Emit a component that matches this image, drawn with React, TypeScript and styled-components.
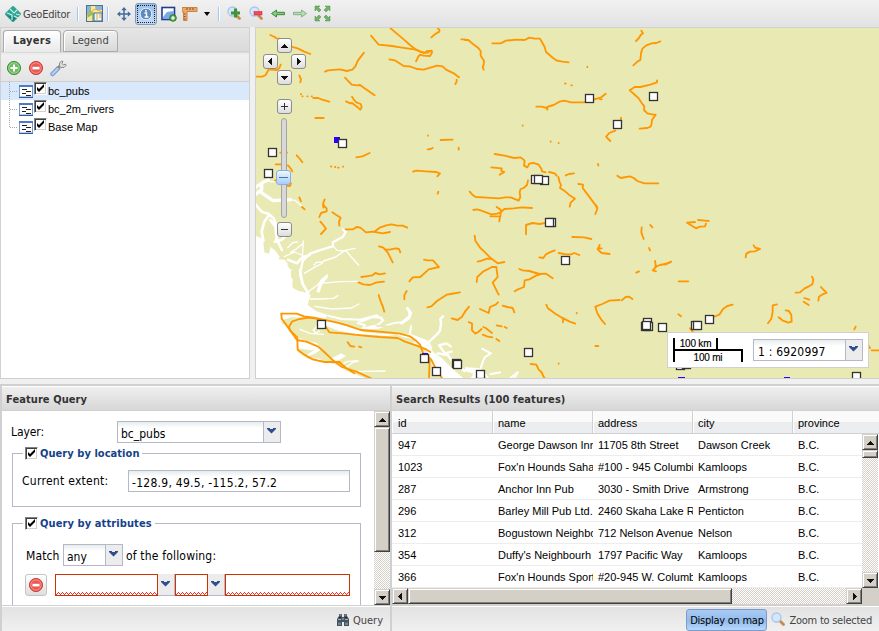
import React from "react";
import styled, { createGlobalStyle, css } from "styled-components";

const Global = createGlobalStyle`
  * { box-sizing: border-box; }
  html, body { margin: 0; padding: 0; }
  body { background: #f0f0f0; overflow: hidden; }
  svg { display: block; }
`;

const tahoma = css`font-family: "DejaVu Sans Condensed", "DejaVu Sans", sans-serif; font-stretch: condensed;`;
const arial = css`font-family: "Liberation Sans", Arial, sans-serif;`;

const Text = styled.span<{ $size?: number; $ls?: number; $bold?: boolean; $color?: string; $ml?: number; $dy?: number; $w?: number }>`
  ${tahoma}
  font-size: ${(p) => p.$size ?? 12}px;
  letter-spacing: ${(p) => p.$ls ?? 0}px;
  font-weight: ${(p) => (p.$bold ? 700 : 400)};
  color: ${(p) => p.$color ?? "#000"};
  margin-left: ${(p) => p.$ml ?? 0}px;
  padding-top: ${(p) => p.$dy ?? 0}px;
  width: ${(p) => (p.$w ? `${p.$w}px` : "auto")};
  flex: none;
  white-space: nowrap;
`;

const Window = styled.div`
  width: 879px;
  height: 631px;
  display: flex;
  flex-direction: column;
  overflow: hidden;
  background: #f0f0f0;
`;
const Toolbar = styled.header`
  height: 27px;
  flex: none;
  display: flex;
  align-items: center;
  padding-left: 4px;
  background: linear-gradient(#f1f1f1, #e2e2e2);
`;
const Slot = styled.div<{ $ml?: number; $w?: number }>`
  width: ${(p) => p.$w ?? 16}px;
  flex: none;
  margin-left: ${(p) => p.$ml ?? 0}px;
`;
const Separator = styled.i<{ $ml: number }>`
  width: 2px;
  height: 14px;
  margin-left: ${(p) => p.$ml}px;
  background: linear-gradient(90deg, #98c8ff 50%, #fff 50%);
`;
const Pressed = styled.div`
  width: 22px;
  height: 22px;
  margin-left: 3px;
  border: 1px solid #7b9cc8;
  border-radius: 3px;
  background: linear-gradient(#9dbfe8, #c4dbf6);
  display: grid;
  place-items: center;
  outline: 1px dotted #222;
  outline-offset: -3px;
`;

const Upper = styled.main`
  height: 357px;
  flex: none;
  display: flex;
  gap: 5px;
`;
const Sidebar = styled.aside`
  width: 250px;
  height: 352px;
  display: flex;
  flex-direction: column;
  border: 1px solid #d0d0d0;
  background: #fff;
`;
const Tabs = styled.div`
  height: 27px;
  flex: none;
  display: flex;
  align-items: flex-end;
  padding: 0 2px 3px;
  gap: 2px;
  background: linear-gradient(#e6e6e6, #dadada 23px, #c8c8c8 24px, #ececec 25px);
`;
const Tab = styled.div<{ $active?: boolean; $w: number }>`
  width: ${(p) => p.$w}px;
  height: 22px;
  display: flex;
  justify-content: center;
  line-height: 20px;
  border: 1px solid #aaa;
  border-bottom: ${(p) => (p.$active ? "0" : "1px solid #aaa")};
  border-radius: 4px 4px 0 0;
  background: ${(p) => (p.$active ? "linear-gradient(#fff, #e9e9e9)" : "linear-gradient(#f0f0f0, #d8d8d8)")};
  box-shadow: inset 1px 1px #fff;
`;
const TreeBar = styled.div`
  height: 27px;
  flex: none;
  display: flex;
  align-items: center;
  padding-left: 5px;
  gap: 6px;
  border-bottom: 1px solid #d0d0d0;
  background: linear-gradient(#f0f0f0, #e4e4e4);
`;
const TreeRow = styled.div<{ $on?: boolean }>`
  height: 18px;
  display: flex;
  align-items: center;
  padding-left: 7px;
  background: ${(p) => (p.$on ? "#d9e8fb" : "#fff")};
`;
const TreeLabel = styled.span`
  ${arial}
  font-size: 11px;
  margin-left: 1px;
  line-height: 18px;
`;
const CheckBox = styled.span<{ $ml?: number; $up?: number }>`
  width: 13px;
  height: 13px;
  flex: none;
  margin-left: ${(p) => p.$ml ?? 0}px;
  margin-bottom: ${(p) => p.$up ?? 0}px;
  border: 1px solid;
  border-color: #808080 #fff #fff #808080;
  box-shadow: inset 1px 1px #404040, inset -1px -1px #d4d0c8;
  background: #fff;
`;
const Tick = (p: { ml?: number; up?: number }) => (
  <CheckBox $ml={p.ml} $up={p.up}>
    <svg width="11" height="11" viewBox="0 0 11 11"><path d="M2 4v3l2 2 5-5V1L4 6z" fill="#000" /></svg>
  </CheckBox>
);

const MapPanel = styled.section`
  flex: 1;
  height: 352px;
  position: relative;
  border: 1px solid #d0d0d0;
  border-right: 0;
  overflow: hidden;
  background: #e9e9b4;
`;
const MapButton = styled.button<{ $x: number; $y: number }>`
  position: absolute;
  left: ${(p) => p.$x}px;
  top: ${(p) => p.$y}px;
  width: 15px;
  height: 15px;
  padding: 0;
  display: grid;
  place-items: center;
  border: 1px solid #8c8c8c;
  border-radius: 3px;
  background: linear-gradient(#fff, #ddd);
`;
const SliderTrack = styled.div`
  position: absolute;
  left: 25px;
  top: 90px;
  width: 6px;
  height: 100px;
  border: 1px solid #a4a4a4;
  border-radius: 3px;
  background: #d8d8d8;
`;
const SliderThumb = styled.div`
  position: absolute;
  left: 20px;
  top: 142px;
  width: 15px;
  height: 15px;
  border: 1px solid #88b0e4;
  border-radius: 3px;
  background: linear-gradient(#eef6ff, #a7cdfb);
  &::after { content: ""; display: block; height: 1px; margin: 6px 2px; background: #4678b8; }
`;
const ScaleBox = styled.div`
  position: absolute;
  left: 411px;
  top: 304px;
  width: 202px;
  height: 36px;
  display: flex;
  align-items: center;
  padding-left: 5px;
  border: 1px solid #d0d0d0;
  background: #fff;
`;
const ScaleBar = styled.div`
  width: 70px;
  height: 24px;
  flex: none;
  ${arial}
  font-size: 10px;
  line-height: 10px;
  -webkit-text-stroke: .15px #000;
  text-align: center;
`;
const Kilometres = styled.div`width: 45px; height: 11px; border: 2px solid #000; border-width: 0 2px 0 2px; line-height: 12px; letter-spacing: -.2px;`;
const Miles = styled.div`width: 70px; height: 13px; border: 2px solid #000; border-bottom: 0; line-height: 13px; letter-spacing: -.2px;`;

const Combo = styled.div<{ $w: number; $ml?: number }>`
  width: ${(p) => p.$w}px;
  height: 22px;
  flex: none;
  margin-left: ${(p) => p.$ml ?? 0}px;
  display: flex;
  border: 1px solid #b5b8c8;
  background: linear-gradient(#e6ecec, #fff 6px);
`;
const ComboText = styled.div`
  flex: 1;
  padding: 3px 0 0 3px;
  line-height: 18px;
  overflow: hidden;
  display: flex;
`;
const Trigger = styled.div<{ $solo?: boolean }>`
  width: 17px;
  height: ${(p) => (p.$solo ? 22 : 20)}px;
  flex: none;
  display: grid;
  place-items: center;
  padding: 0 1px 2px 0;
  background: #ececec;
  border: 0 solid #b5b8c8;
  border-left-width: ${(p) => (p.$solo ? 0 : 1)}px;
  border-bottom-width: ${(p) => (p.$solo ? 1 : 0)}px;
  border-right-width: ${(p) => (p.$solo ? 1 : 0)}px;
`;
const Chevron = () => (
  <svg width="9" height="6" viewBox="0 0 9 6"><path d="M0 0h3v1h3V0h3v1L4.500 5.500 0 1z" fill="#2e4d92" /></svg>
);

const Lower = styled.section`
  height: 247px;
  flex: none;
  display: flex;
  border-top: 2px solid #d0d0d0;
`;
const Panel = styled.section<{ $w: number }>`
  width: ${(p) => p.$w}px;
  flex: none;
  display: flex;
  flex-direction: column;
  border-left: 2px solid #d0d0d0;
`;
const PanelHead = styled.h2`
  height: 25px;
  flex: none;
  margin: 0;
  padding: 1px 0 0 4px;
  display: flex;
  align-items: center;
  border-top: 1px solid #fff;
  border-bottom: 1px solid #d0d0d0;
  background: linear-gradient(#efefef, #d7d7d7);
`;
const PanelBody = styled.div`
  height: 194px;
  flex: none;
  display: flex;
  background: #fff;
  overflow: hidden;
`;
const Footer = styled.footer`
  flex: 1;
  display: flex;
  align-items: center;
  justify-content: flex-end;
  padding: 2px 7px 0 0;
  border-top: 1px solid #d0d0d0;
  box-shadow: inset 0 1px #fff;
  background: linear-gradient(#e2e2e2, #f0f0f0);
`;
const Form = styled.div`
  width: 372px;
  flex: none;
  padding: 10px 13px 0 10px;
`;
const FormRow = styled.div<{ $pl?: number; $mt?: number }>`
  display: flex;
  align-items: center;
  height: 22px;
  padding-left: ${(p) => p.$pl ?? 0}px;
  margin-top: ${(p) => p.$mt ?? 0}px;
`;
const Group = styled.div<{ $h: number; $mt: number }>`
  width: 349px;
  height: ${(p) => p.$h}px;
  margin-top: ${(p) => p.$mt}px;
  border: 1px solid #b5b8c8;
`;
const Legend = styled.div`
  width: fit-content;
  height: 14px;
  margin: -8px 0 0 10px;
  padding: 0 3px 0 2px;
  display: flex;
  align-items: center;
  background: #fff;
`;
const Field = styled.div`
  width: 222px;
  height: 22px;
  flex: none;
  padding: 3px 3px 0;
  line-height: 18px;
  display: flex;
  border: 1px solid #b5b8c8;
  background: linear-gradient(#e6ecec, #fff 6px);
`;
const Invalid = styled.div<{ $w: number }>`
  width: ${(p) => p.$w}px;
  height: 22px;
  flex: none;
  border: 1px solid #c30;
  display: flex;
  align-items: flex-end;
  overflow: hidden;
`;
const Wave = () => (
  <svg width="130" height="3" shapeRendering="crispEdges">
    <defs><pattern id="wave" width="4" height="3" patternUnits="userSpaceOnUse">
      <path d="M0 2h1v1H0zM1 1h1v1H1zM2 0h1v1H2zM3 1h1v1H3z" fill="#e33" /></pattern></defs>
    <rect width="130" height="3" fill="url(#wave)" />
  </svg>
);
const SquareButton = styled.button`
  width: 22px;
  height: 22px;
  flex: none;
  padding: 0;
  margin-right: 8px;
  display: grid;
  place-items: center;
  border: 1px solid #c4c4c4;
  border-radius: 3px;
  background: linear-gradient(#fff, #dedede);
`;

const raised = css`
  background: #d4d0c8;
  border: 1px solid;
  border-color: #d4d0c8 #404040 #404040 #d4d0c8;
  box-shadow: inset 1px 1px #fff, inset -1px -1px #808080;
`;
const ScrollBar = styled.div<{ $h?: boolean; $len: number }>`
  width: ${(p) => (p.$h ? p.$len : 16)}px;
  height: ${(p) => (p.$h ? 16 : p.$len)}px;
  flex: none;
  display: flex;
  flex-direction: ${(p) => (p.$h ? "row" : "column")};
  background: repeating-conic-gradient(#d4d0c8 0 25%, #fff 0 50%) 0 0 / 2px 2px;
`;
const ScrollButton = styled.div`
  width: 16px;
  height: 16px;
  flex: none;
  display: grid;
  place-items: center;
  ${raised}
`;
const ScrollThumb = styled.div<{ $len: number }>`
  flex: 0 0 ${(p) => p.$len}px;
  margin-right: auto;
  margin-bottom: auto;
  align-self: stretch;
  min-width: 16px;
  min-height: 16px;
  ${raised}
`;
const ShortThumb = styled(ScrollThumb)`min-height: 8px;`;
const Arrow = ({ dir }: { dir: "up" | "down" | "left" | "right" }) => {
  const d = { up: "M0 6h7L3.500 2z", down: "M0 2h7L3.500 6z", left: "M5 0v7L1 3.500z", right: "M2 0v7l4-3.500z" }[dir];
  return <svg width="7" height="7" viewBox="0 0 7 7" shapeRendering="crispEdges"><path d={d} fill="#111" /></svg>;
};

const ResultGrid = styled.div`
  flex: 1;
  display: flex;
  flex-direction: column;
`;
const HeadRow = styled.div`
  height: 23px;
  flex: none;
  display: flex;
  border-bottom: 1px solid #d0d0d0;
  background: linear-gradient(#fafafa 50%, #ededee 50%, #ebedf0);
`;
const HeadCell = styled.div`
  ${arial}
  width: 100px;
  padding: 1px 0 0 5px;
  line-height: 22px;
  font-size: 11px;
  border-right: 1px solid #d0d0d0;
  box-shadow: inset 1px 0 #fff;
  &:first-child { width: 101px; padding-left: 6px; }
  &:last-child { border-right: 0; width: 86px; }
`;
const GridArea = styled.div`
  height: 154px;
  flex: none;
  display: flex;
`;
const Rows = styled.div`
  width: 470px;
  height: 154px;
`;
const Row = styled.div`
  height: 22px;
  display: flex;
  border-bottom: 1px solid #ededed;
  padding-left: 1px;
`;
const Cell = styled.div`
  ${arial}
  width: 100px;
  padding-left: 5px;
  line-height: 22px;
  font-size: 11px;
  white-space: nowrap;
  overflow: hidden;
  &:last-child { width: 69px; }
`;
const BottomScroll = styled.div`
  height: 17px;
  display: flex;
  background: #d4d0c8;
`;
const ToggleButton = styled.button`
  height: 22px;
  width: 81px;
  padding: 1px 0 0;
  display: flex;
  align-items: center;
  justify-content: center;
  border: 1px solid #7b9cc8;
  border-radius: 3px;
  background: linear-gradient(#a6c8f2 10%, #92bbec 55%, #b7d8fd);
`;

const Lens = ({ sign }: { sign?: "+" | "-" }) => (
  <svg width="16" height="16" viewBox="0 0 16 16">
    <path d="M9 9l3.500 3.500" stroke="#c58c52" strokeWidth="2.800" strokeLinecap="round" />
    <circle cx="5.500" cy="5.500" r="4.500" fill="#d3e8fc" stroke="#a9c6ea" strokeWidth="1.300" />
    {sign === "+" && <path d="M9.500 4v3h3v3h-3v3h-3v-3h-3V7h3V4z" transform="translate(.500 -1.500)" fill="#3d9439" />}
    {sign === "-" && <rect x="5" y="5.500" width="8" height="3.500" fill="#ee5148" stroke="#d14" strokeWidth=".5" />}
  </svg>
);
const RoundIcon = ({ add, size = 16 }: { add?: boolean; size?: number }) => (
  <svg width={size} height={size} viewBox="0 0 16 16">
    <circle cx="8" cy="8" r="6.600" fill={add ? "#6dbb63" : "#ea5a52"} stroke={add ? "#40913a" : "#c84440"} />
    <circle cx="8" cy="8" r="5.200" fill="none" stroke={add ? "#a6dc9f" : "#f79b93"} strokeWidth=".8" />
    <path d={add ? "M7 4.500h2V7h2.500v2H9v2.500H7V9H4.500V7H7z" : "M4.500 6.800h7v2.600h-7z"} fill="#fff" />
  </svg>
);
const GreenArrow = ({ right }: { right?: boolean }) => (
  <svg width="16" height="16" viewBox="0 0 16 16">
    <path d={right ? "M.5 6.300h8V4L13.500 7.500l-5 3.500V8.700h-8z" : "M13.500 6.300h-8V4L.500 7.500l5 3.500V8.700h8z"}
      fill={right ? "#b9dcb4" : "#8ac77f"} stroke={right ? "#80b683" : "#3d8c3c"} strokeWidth="1" />
  </svg>
);
const LayerIcon = () => (
  <svg width="15" height="14" viewBox="0 0 15 14">
    <rect x="1.500" y="1.500" width="13" height="11.500" fill="#fff" stroke="#6f99d8" />
    <rect x="1" y="1" width="14" height="2" fill="#4c7cc9" />
    <path d="M4 5.500h5M8 7.500h5M4 9.500h4M8 11.500h5" stroke="#222" />
    <path d="M1 13.500h14" stroke="#315b9e" />
  </svg>
);
const TreeLine = ({ last }: { last?: boolean }) => (
  <svg width="10" height="18"><path d={`M1.500 0V${last ? 10 : 18}M2 9.500h8`} stroke="#a8a8a8" strokeDasharray="1 1" fill="none" /></svg>
);
const Binoculars = () => (
  <svg width="14" height="14" viewBox="0 0 14 14">
    <path d="M3 1h3v3h2V1h3v2l2 3v7H8V9H6v4H1V6l2-3z" fill="#46525e" />
    <path d="M3.500 2h2M8.500 2h2M2 6.500h3M9 6.500h3M6 6h2" stroke="#9fb4c4" />
    <path d="M2 9.500h3v2.500H2zM9 9.500h3v2.500H9z" fill="#6c8496" />
    <path d="M3 4.500h2M9 4.500h2" stroke="#20262c" />
  </svg>
);

// Polylines are grouped by map tile; a tile is drawn at three units per pixel.
const tiles = [
  { x: -1, y: -1, lines: [
    "M46 24l13 6 5 4 10 1 11 5 25 19 20 6 16 8 20 8", "M348 26l11 13 12 14 40 4 30 5 41 6 24 10 10-3 14-4",
    "M406 3l15 13 26 22 18 16 18 14 13 6 12 3h11", "M483 103l7-14 5-6 10 3 20 1 5-8 1-6-15-1", "M529 31l12-10 12-7v-6l-5-4",
    "M403 97l16 3 27 17 18 1 22 8 20 2 20-6 20-6 17 2 10 10 25 12 14 11", "M605 158v6l-4 7", "M619 37h11",
    "M210 134l9-4 35-3 22 5 16-4 9-10 8-18 18-23", "M270 152l20 21 15 2 10-1 20 14 24 17", "M273 223l13 6 5-1 17 13 8 7 4-7-3-10-13-5-8-9-5-8",
    "M0 149h22l10-5 9-17 25 2 7-6 4-10", "M133 145l5 12-2 9", "M138 201v1M142 208h1M157 208h1M170 208h1M175 213l14 0 12 5 22 6",
    "M181 273h25", "M304 391l18-3 22-10", "M125 385l10 11 7 10", "M76 377h20", "M62 412h14l24 4 8 10 4 7", "M60 460l25 15 20 2 3-8",
    "M228 418l1 1M240 420h1M249 422h2M264 419h1", "M474 434l10-3 30 2 28 2 13 4-8 9", "M557 339l36-1M518 367l9-1 6-3M519 325v1M611 362v6M550 494l-2 6M209 517l-4 10 0 15M133 511l5 12"
  ] },
  { x: 209, y: -1, lines: [
    "M0 39l10 0 15 13 14 10 8 10v14l10 15-1 13-3 5 3 9", "M82 49h25l16-8 31-3 25 1 14-7 17 3 15 0 14 25 4 15 21 18 12 8 17 3 18 2",
    "M513 42l9-9 5-9 7-5-5-8", "M505 115l13-12 8-4 2-20 4-14 12-10 16-6 14-1 12-5", "M367 119v1M300 169l2 1M319 175h2M173 295v1M257 343v1M281 348v1M468 272v6M399 411l1 5M405 217h5",
    "M214 239h15l16 4 4-4 17-5 17-10 15-3 20 5h38l25-7 26-7 15-12", "M247 240v8", "M576 160v6l-20 7-30 7-17 0-15 10 13 11 14 13 9 14 8 10-1 11 10 10 18 4 7 0-11 16-1 10-3 10-10 4-23 2",
    "M451 311l-18 7-10 11 7 7 6 6", "M457 446l10 7 28-5 11 5 11 9 21 7h42", "M89 381l30 5 28 7 20-2 12 10-2 15 10 5 6-11 12-2 16 5 8 12 2 8 11 3",
    "M79 421l31 3-1 8 9 3-14 8", "M14 494l10 11 8 5 34 2 35 2 20-3 16 0 24 10 5-11-2-15 3-9 9-3 10-9 3-14", "M252 435l17 4 6 7 M280 450l4 16 4 7-3 10 13 8 16 14 16 10-13 12-3 12",
    "M302 445l10-4 15-2", "M340 471l14 2-1 10 15 20 15 20 14 18"
  ] },
  { x: -1, y: 177, lines: [
    "M204 0l11 10 0 9-17 5-5 12M196 50l9 10 8 11-15 16M232 22l12 8 13 8-5 12 1 12M141 6l8 7",
    "M272 73h22l11-7 11 2 17 14 20-2 30 5 22-4M360 79l14-11 20-7 15-3 18 4h16l14 6", "M372 124l13 4 13 14 15 30M389 133l15 1 18-4 10 2 4 10",
    "M507 164l10 2 17 0 18 20-31 7-25 23-23 1-10 12", "M319 216l14-2 19-3 9-7 13 4 16-3M310 232l15 6 20 2 20-8 22-2",
    "M371 270l7 22 5 11 5 17M455 258l-7 13v12M517 307l12-3 17-16 29-19 12-2 28-5", "M590 340l18 5 13-10 9-15",
    "M79 326h46l22 8 30 4 70 15 30 8 40 14 81 7 37 4 30 8 20 15 10 10 9 25 14 10 11 10 8 17 25 40",
    "M79 326l1 15 12 16 14 20 21 20 1 37 20 15 25 14 36 8h44l20 18 25 16",
    "M106 377l-4-12 9-15 22-8 30-4 20 3 15 3 25 38 40 3 56 6 54 5 55 3 22 11 35 12 30 12 11 7",
    "M106 377l20 28 28 5 36 15 21 19 23 22 27 20 43 14 44 20", "M515 450l9 10-2 60M278 412l8 11 12 2M312 425l7 2"
  ] },
  { x: 209, y: 177, lines: [
    "M25 15l10-2 12 3 32 12 18-2 10-4 11-10 28-2 24-3 31 2M95 6l13 9-2 21M76 34l14 0 15 0-2 15", "M183 88v-28l20-6 20 3 18-3",
    "M392 0l5 12-6 15M322 96l35 1 22 5M223 157l12 2 8-11 11-6 15-6M281 144l22 4 15 0 10-4 15 6M404 120l-6 13 12 11 24 3M398 130l12 0",
    "M530 67l-1 15 7 20M556 60l6 7M552 129l3 7M570 168l3 18-10 10 10 3M570 186l15-6 15-3 15-5M514 203l8-4",
    "M29 92l2 15 15 22 12 11 20 20 20 15 20-4M38 170l12-3 16-6 14 1M35 231l2-15 17-16 27-14 13 0 4 30-15 17 10 20 8 16",
    "M163 192l10 4 20 2 30 9 20-1 20 14M223 209l-10 3-20 11-14 3-2 20-20 8-8 5", "M244 299l4 10 23 17 20 12 23 12 17 6M294 340v12M335 324v1",
    "M0 320l8-10 4-5M45 312l13 6 13 6 4-18 17-7 7-7M113 302l14 4 16 3 5 13", "M11 351l10 5 0 20 10 10 9-5 10-9M55 366l7 3 19 15M53 389l13 5 16 3M95 361l15 3M119 366l6 3M94 402l9 6",
    "M420 357l-11-13-12-19-6-20 21-8 21-10 31-2M470 286l12-10 10-1 10 7M391 423h9M281 475v1M197 477l17 2 7 15 8 7 10 20"
  ] },
  { x: 409, y: 177, lines: [
    "M90 51l-24 2 27 17 12-5 15-1 3-8M99 45l20 2 12 1", "M266 121l4 7 15 4-15 7-15 1-11 6-2 11", "M0 179l19-9M41 229h29M40 328l8 6M75 370l8 10",
    "M146 336l18-8 10-16 13-9 16-4", "M441 215l4 9-3 14-10 6-13 6-14 12-13 1", "M468 246l8 9 9 8-12 5-11 7-2 12", "M418 279l15 5M416 290l15 10",
    "M336 298l-13 3v20l-4 20-10 14M362 316l10 2 7 12 1 20-10 3-18-7-11-9M572 365l-4 8M612 424l3 5M620 436h22"
  ] },
];
// Marker centres, in map pixels.
const pubs = [[333, 70], [397, 68], [361.5, 96], [16, 124], [86.5, 115.5], [12.5, 145], [279.5, 151], [288, 152], [282, 151.5], [295, 194.5], [293.5, 194],
  [309.5, 232], [65.5, 296], [168.5, 330], [180, 343.5], [200.5, 335], [201.5, 336], [224, 346.5], [272.5, 324], [391.5, 294.5], [389.5, 298], [392, 298], [390.5, 297.5],
  [406.5, 299], [439, 297], [441, 297], [453, 291.5], [424, 337], [430, 336], [600.5, 348.5]];

const land = "#e9e9b4";
const MapDrawing = () => (
  <svg width="623" height="350" viewBox="0 0 623 350">
    <rect width="623" height="350" fill={land} />
    <g transform="translate(-1 177) scale(.33333)">
      <path fill="#fff" d="M0 92l25 10 12 16 25 20 10 14 20 15 20 30-4 18 12 20 25 25 22 10-6 18-3 12 25 18 36 12-10 12 60 20 60 20 70 6 70 0 40 15 15 8 11 30 25 18 30 30 45 40v50H0z" />
      <path fill={land} d="M78 352l13-10 20-5 80 3 20 22 40 15 50 10 70 4 60 4 34 17 40 14 10 12 10 17 10 40 30 30H345l-39-15-36-15-20-15-35-8-25-12-30 2-30-20-2-12 40 6 28-8-10-14-30-5-22-9-15-13z" />
      <path fill={land} d="M25 110l14-4 8 22-6 18-13-4zM96 136l18 0 8 11-16 13-12-8zM102 170l20-5 10 15-2 15-25-2-8-12zM75 152l18 3-2 10-20-2zM112 228l10-7 10 20 15 20-16-3-18-10zM115 115l15-8 17 4-13 25-12-6zM107 197l13-4 4 14-8 16-8-12z" />
      <g fill="none" stroke="#fff" strokeWidth="4" strokeLinecap="round" strokeLinejoin="round">
        <path strokeWidth="7" d="M145 240l-10-32 8-40 22-22 35-12 33-10 1-12 30-17 8-14-8-8" />
        <path d="M234 122l12 14 28 2 15 18 22 24M148 205l30-18 20-10 8-9 36-12 28-20 30-6M177 180l8-8 18-1" />
        <path d="M150 268l40-30 10-15 18-14M195 235l60-5 55-1M165 282h30l40-2 14-8M180 304l50 8 60-3 22-12" />
        <path strokeWidth="10" d="M190 258l8-24 16-18" />
        <path strokeWidth="8" d="M135 195l7 40 18 30M100 165l26 10 12-14M142 158l22-8M46 45l15 20 5 40 15 30M3 0l17 20 20 6 16 14 12 35M25 105l-5-25 8-30 12-17M60 110l20-6 16-15M75 78l-12 25" />
        <path d="M98 128l15-15 14-2M108 142l18-12 20-16M88 155l30-14 30 12M145 108l-3 50" />
        <path strokeWidth="6" d="M220 332l40 10 55 2 50-13 20 15-18 15-40 9 45-2 50-15 20-1 23-21-5-18-3-3M465 386l3-22M320 375l10-15-22-6 44-18 28 2" />
        <path strokeWidth="9" d="M440 354l22-16 5-14-10-14" />
        <path strokeWidth="7" d="M520 412l25-23 10-12 3-23-2-12 8-8M520 430l35-10 20-5 12 9M555 425l15 20 20-5M548 445l30 5 13 18 38 30" />
        <path d="M195 355l-20 20 7 10 12-7M135 373l30 12 40 3M295 500l95-2M260 497l15-12 20-14 15-3M250 486l25-16 30-3" />
      </g>
      <path fill={land} d="M300 351l40 4 40 12 35 5 10-7-38-5-25 0-25-3zM400 391l18 2-6 9 28 8 40 3-3-10-34-7-20-8zM532 421l15-8 3 10-12 20-8-8z" />
      <path fill="#fff" d="M155 450l30-20 13 4-20 12-23 9zM230 460l28-15 15 8-20 12-15 4z" />
    </g>
    <g fill="none" stroke="#fff" strokeLinejoin="round" transform="translate(-1 -1) scale(.33333)">
      <path strokeWidth="10" d="M0 482l24-16 20-9M20 468l0 20-20 15M14 493l40 28 56-3" />
      <path strokeWidth="4" d="M42 464h24M106 518l14 2 20 17" />
    </g>
    <g transform="translate(209 177) scale(.33333)" fill="none" stroke="#fff" strokeWidth="6">
      <path d="M50 430l27 15-18 12-6 14-6 19-28 30M0 490l40 2 20 15 14 20M74 508l34-6M135 520l25-20-13 20" />
      <path strokeWidth="13" d="M0 492l32 9-5 20" />
    </g>
    {tiles.map((t, i) => (
      <g key={i} transform={`translate(${t.x} ${t.y}) scale(.33333)`} fill="none" stroke="#ff9700" strokeWidth="5.5" strokeLinecap="round" strokeLinejoin="round">
        {t.lines.map((d, n) => <path key={n} d={d} />)}
      </g>
    ))}
    <path fill="#2b00ff" d="M78 109h6v6h-6zM166 325h6v3h-6zM422 349h7v1h-7zM528 349h6v1h-6z" />
    {pubs.map(([x, y], i) => (
      <rect key={i} x={Math.floor(x - 4) + 0.5} y={Math.floor(y - 4) + 0.5} width="8" height="8" fill="#fff" stroke="#333" strokeWidth="1.3" />
    ))}
  </svg>
);

const rows = [
  ["947", "George Dawson Inn", "11705 8th Street", "Dawson Creek"],
  ["1023", "Fox'n Hounds Saha", "#100 - 945 Columbia", "Kamloops"],
  ["287", "Anchor Inn Pub", "3030 - Smith Drive", "Armstrong"],
  ["296", "Barley Mill Pub Ltd.", "2460 Skaha Lake R", "Penticton"],
  ["312", "Bogustown Neighbo", "712 Nelson Avenue", "Nelson"],
  ["354", "Duffy's Neighbourh", "1797 Pacific Way", "Kamloops"],
  ["366", "Fox'n Hounds Sport", "#20-945 W. Columb", "Kamloops"],
];

const TopBar = () => (
  <Toolbar>
    <Slot $w={18}>
      <svg width="18" height="18" viewBox="0 0 18 18">
        <path d="M9 2.500l6.500 6.500L9 15.500 2.500 9z" fill="#2fa594" stroke="#2fa594" strokeWidth="3" strokeLinejoin="round" />
        <path d="M2 9l7 7 3-3-7-2z" fill="#137e72" />
        <path d="M6 4l4 4 3-3M3 8l5 2 0 5M12 9l4 1M10 11l4 2" stroke="#c9eee6" strokeWidth="1.200" fill="none" />
      </svg>
    </Slot>
    <Text $size={11} $color="#444" $ml={1} $dy={1} $ls={-0.22}>GeoEditor</Text>
    <Separator $ml={7} />
    <Slot $ml={7}>
      <svg width="17" height="17" viewBox="0 0 17 17">
        <rect x=".5" y=".5" width="16" height="16" fill="#f6e79a" stroke="#4b7296" />
        <path d="M1 1h4v7L1 11zM9 1h7v4H10z" fill="#88b5dc" /><path d="M5 1v5l4 3v7H6v-6L1 13" fill="#92bf64" />
        <path d="M1 10l8-6 7 3" stroke="#f2a534" fill="none" /><rect x="8" y="8" width="8" height="8" fill="#eef4fa" stroke="#4b7296" />
        <path d="M10 10h2M10 12h2M10 14h2M13 10h2M13 12h2" stroke="#dca92d" />
      </svg>
    </Slot>
    <Separator $ml={5} />
    <Slot $ml={7}>
      <svg width="16" height="16" viewBox="0 0 16 16"><path d="M8 2v12M2 8h12" stroke="#426ba0" strokeWidth="1.500" /><path d="M8 1l2.800 3.200H5.200zM8 15l2.800-3.200H5.200zM1 8l3.200-2.800v5.600zM15 8l-3.200-2.800v5.600z" fill="#426ba0" /></svg>
    </Slot>
    <Pressed>
      <svg width="14" height="14" viewBox="0 0 14 14"><circle cx="7" cy="7" r="5.800" fill="#5a8abf" stroke="#e5effa" /><path d="M7 3v1.800M5.500 6H7.500v4M5.500 10h4" stroke="#fff" strokeWidth="1.500" fill="none" /></svg>
    </Pressed>
    <Slot $ml={4}>
      <svg width="16" height="16" viewBox="0 0 16 16"><rect x="1" y="1.500" width="12.500" height="12" fill="#fff" stroke="#223c90" strokeWidth="1.600" /><path d="M2 13V11l4-5 7-1v8z" fill="#78a9e5" /><circle cx="12" cy="12" r="3.300" fill="#5aa74e" stroke="#357b2f" /><path d="M12 10v4M10 12h4" stroke="#fff" strokeWidth="1.200" /></svg>
    </Slot>
    <Slot $ml={5}>
      <svg width="17" height="16" viewBox="0 0 17 16"><path d="M0 1.500h15v4H5v9H1.500V6H0z" fill="#eaa968" stroke="#c88245" /><path d="M5 2v2M8 2v2M11 2v2M2 8h1.500M2 10.500h1.500M2 13h1.500" stroke="#8d4b1e" /></svg>
    </Slot>
    <Slot $ml={6} $w={5}><svg width="6" height="4"><path d="M0 0h6L3 4z" fill="#000" /></svg></Slot>
    <Separator $ml={9} />
    <Slot $ml={7}><Lens sign="+" /></Slot>
    <Slot $ml={6}><Lens sign="-" /></Slot>
    <Slot $ml={6}><GreenArrow /></Slot>
    <Slot $ml={6}><GreenArrow right /></Slot>
    <Slot $ml={5}>
      <svg width="17" height="17" viewBox="0 0 17 17"><path d="M1 1h5L4.500 2.500 7 5 5 7 2.500 4.500 1 6zM16 1v5l-1.500-1.500L12 7l-2-2 2.500-2.500L11 1zM1 16v-5l1.500 1.500L5 10l2 2-2.500 2.500L6 16zM16 16h-5l1.500-1.500L10 12l2-2 2.500 2.500L16 11z" fill="#72b169" stroke="#4b914b" strokeWidth=".5" /></svg>
    </Slot>
  </Toolbar>
);

const QueryForm = () => (
  <Form>
    <FormRow>
      <Text $ml={-1} $w={34} $ls={-0.1}>Layer:</Text>
      <Combo $w={164} $ml={72}><ComboText><Text>bc_pubs</Text></ComboText><Trigger><Chevron /></Trigger></Combo>
    </FormRow>
    <Group $h={54} $mt={10}>
      <Legend><Tick /><Text $size={11} $bold $color="#15428b" $ml={2} $dy={1} $ls={0.05}>Query by location</Text></Legend>
      <FormRow $pl={9} $mt={10}>
        <Text $w={106} $ls={0.28}>Current extent:</Text>
        <Field><Text $ls={0.27}>-128.9, 49.5, -115.2, 57.2</Text></Field>
      </FormRow>
    </Group>
    <Group $h={100} $mt={16}>
      <Legend><Tick /><Text $size={11} $bold $color="#15428b" $ml={2} $dy={1} $ls={0.1}>Query by attributes</Text></Legend>
      <FormRow $pl={13} $mt={14}>
        <Text $w={37} $dy={1} $ls={0.1}>Match</Text>
        <Combo $w={60}><ComboText><Text>any</Text></ComboText><Trigger><Chevron /></Trigger></Combo>
        <Text $ml={3} $dy={1} $ls={0.18}>of the following:</Text>
      </FormRow>
      <FormRow $pl={12} $mt={8}>
        <SquareButton><RoundIcon /></SquareButton>
        <Invalid $w={103}><Wave /></Invalid>
        <Trigger $solo><Chevron /></Trigger>
        <Invalid $w={33}><Wave /></Invalid>
        <Trigger $solo><Chevron /></Trigger>
        <Invalid $w={125}><Wave /></Invalid>
      </FormRow>
    </Group>
  </Form>
);

export default function App() {
  return (
    <Window>
      <Global />
      <TopBar />
      <Upper>
        <Sidebar>
          <Tabs>
            <Tab $active $w={58}><Text $size={11} $bold $color="#333" $ls={0.25}>Layers</Text></Tab>
            <Tab $w={55}><Text $size={11} $color="#444">Legend</Text></Tab>
          </Tabs>
          <TreeBar>
            <RoundIcon add />
            <RoundIcon />
            <svg width="17" height="17" viewBox="0 0 17 17"><path d="M2.500 14L8 8.500" stroke="#7999c9" strokeWidth="4.500" strokeLinecap="round" /><path d="M2.500 14L8 8.500" stroke="#b2d0f4" strokeWidth="2.300" strokeLinecap="round" /><path d="M8 8l3.500-3.500" stroke="#8c8c8c" strokeWidth="3" /><path d="M11.500 1L9.500 3v3L11 7.500h3l2-2-.5-1.500-2 1-1.500-1.500 1-2z" fill="#ddd" stroke="#8c8c8c" /></svg>
          </TreeBar>
          {["bc_pubs", "bc_2m_rivers", "Base Map"].map((name, i) => (
            <TreeRow key={name} $on={i === 0}>
              <TreeLine last={i === 2} />
              <LayerIcon />
              <Tick ml={1} up={5} />
              <TreeLabel>{name}</TreeLabel>
            </TreeRow>
          ))}
        </Sidebar>
        <MapPanel>
          <MapDrawing />
          <MapButton $x={21} $y={10}><Arrow dir="up" /></MapButton>
          <MapButton $x={7} $y={26}><Arrow dir="left" /></MapButton>
          <MapButton $x={35} $y={26}><Arrow dir="right" /></MapButton>
          <MapButton $x={21} $y={42}><Arrow dir="down" /></MapButton>
          <MapButton $x={21} $y={71}><svg width="7" height="7"><path d="M0 3.500h7M3.500 0v7" stroke="#333" /></svg></MapButton>
          <SliderTrack />
          <SliderThumb />
          <MapButton $x={21} $y={194}><svg width="7" height="7"><path d="M0 3.500h7" stroke="#333" /></svg></MapButton>
          <ScaleBox>
            <ScaleBar>
              <Kilometres>100 km</Kilometres>
              <Miles>100 mi</Miles>
            </ScaleBar>
            <Combo $w={110} $ml={10}>
              <ComboText><Text $ml={1} $ls={0.2}>1 : 6920997</Text></ComboText>
              <Trigger><Chevron /></Trigger>
            </Combo>
          </ScaleBox>
        </MapPanel>
      </Upper>
      <Lower>
        <Panel $w={390}>
          <PanelHead><Text $size={11} $bold $color="#333" $ls={0.08}>Feature Query</Text></PanelHead>
          <PanelBody>
            <QueryForm />
            <ScrollBar $len={194}><ScrollButton><Arrow dir="up" /></ScrollButton><ScrollThumb $len={125} /><ScrollButton><Arrow dir="down" /></ScrollButton></ScrollBar>
          </PanelBody>
          <Footer><Binoculars /><Text $size={11} $color="#444" $ml={3} $dy={1}>Query</Text></Footer>
        </Panel>
        <Panel $w={489}>
          <PanelHead><Text $size={11} $bold $color="#333" $ls={0.1}>Search Results (100 features)</Text></PanelHead>
          <PanelBody>
            <ResultGrid>
              <HeadRow>{["id", "name", "address", "city", "province"].map((h) => <HeadCell key={h}>{h}</HeadCell>)}</HeadRow>
              <GridArea>
                <Rows>{rows.map((r) => <Row key={r[0]}>{[...r, "B.C."].map((c, i) => <Cell key={i}>{c}</Cell>)}</Row>)}</Rows>
                <ScrollBar $len={154}><ScrollButton><Arrow dir="up" /></ScrollButton><ShortThumb $len={8} /><ScrollButton><Arrow dir="down" /></ScrollButton></ScrollBar>
              </GridArea>
              <BottomScroll>
                <ScrollBar $h $len={470}><ScrollButton><Arrow dir="left" /></ScrollButton><ScrollThumb $len={324} /><ScrollButton><Arrow dir="right" /></ScrollButton></ScrollBar>
              </BottomScroll>
            </ResultGrid>
          </PanelBody>
          <Footer>
            <ToggleButton><Text $size={11} $ls={-0.26}>Display on map</Text></ToggleButton>
            <Slot $ml={4}><Lens /></Slot>
            <Text $size={11} $color="#444" $ml={2} $dy={1} $ls={-0.25}>Zoom to selected</Text>
          </Footer>
        </Panel>
      </Lower>
    </Window>
  );
}
